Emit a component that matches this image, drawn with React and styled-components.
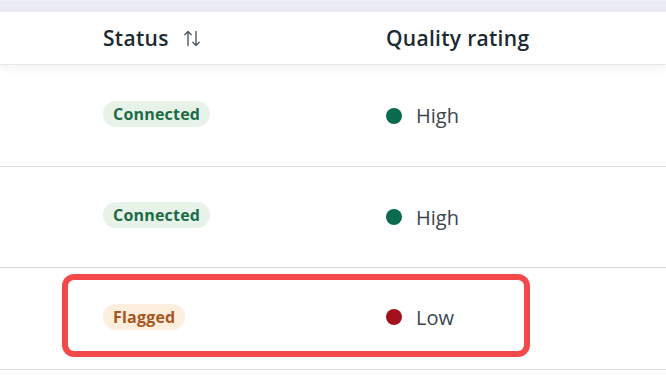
import React from 'react';
import styled, { createGlobalStyle } from 'styled-components';

const GlobalStyle = createGlobalStyle`
  body {
    margin: 0;
    background: #ffffff;
    font-family: "Open Sans", "Liberation Sans", sans-serif;
    color: #1c2b33;
  }
`;

const Page = styled.div`
  width: 666px;
  height: 380px;
  overflow: hidden;
  background: #ffffff;
`;

const TopBand = styled.div`
  height: 12px;
  background: #eaebf5;
  border-top: 1px solid #f1f2f8;
  box-sizing: border-box;
`;

const Row = styled.div`
  position: relative;
  display: grid;
  grid-template-columns: 283px 1fr;
  align-items: center;
  padding-left: 103px;
  height: ${p => p.$height}px;
  box-sizing: border-box;
  border-bottom: 1px solid ${p => (p.$header ? '#e6e7ea' : '#d8dce0')};
  ${p => p.$header && 'box-shadow: 0 3px 10px rgba(0, 0, 0, 0.05); z-index: 1;'}
`;

const HeadCell = styled.div`
  display: flex;
  align-items: center;
  gap: 14px;
  font-size: 21px;
  font-weight: 600;
  color: #1c2b33;
  letter-spacing: 0.3px;
`;

const Badge = styled.span`
  justify-self: start;
  display: inline-flex;
  align-items: center;
  height: 26px;
  padding: 0 10px;
  margin-top: -4px;
  border-radius: 13px;
  font-size: 16px;
  font-weight: 700;
  letter-spacing: 0.2px;
  background: ${p => (p.$tone === 'warn' ? '#fdeedd' : '#e7f3e8')};
  color: ${p => (p.$tone === 'warn' ? '#a8561c' : '#1c6b47')};
`;

const Rating = styled.div`
  display: flex;
  align-items: center;
  gap: 14px;
  font-size: 20px;
  color: #3a464e;
  margin-top: ${p => p.$shift || 0}px;
`;

const Dot = styled.span`
  width: 16px;
  height: 16px;
  border-radius: 50%;
  background: ${p => p.$color};
`;

const Highlight = styled.div`
  position: absolute;
  left: 62px;
  top: 6px;
  width: 468px;
  height: 83px;
  box-sizing: border-box;
  border: 6px solid #f24a4a;
  border-radius: 12px;
  pointer-events: none;
`;

const SortIcon = () => (
  <svg width="18" height="17" viewBox="0 0 18 17" fill="none" stroke="#4b5a63" strokeWidth="1.4" strokeLinecap="round" strokeLinejoin="round">
    <path d="M5 15.5V1.5M1.8 4.7L5 1.5l3.2 3.2" />
    <path d="M13 1.5v14M9.8 12.3L13 15.5l3.2-3.2" />
  </svg>
);

const rows = [
  { status: 'Connected', tone: 'ok', rating: 'High', color: '#0b6b4e' },
  { status: 'Connected', tone: 'ok', rating: 'High', color: '#0b6b4e' },
  { status: 'Flagged', tone: 'warn', rating: 'Low', color: '#a3111c', flagged: true, shift: -3 },
];

export default function App() {
  return (
    <Page>
      <GlobalStyle />
      <TopBand />
      <Row $header $height={53}>
        <HeadCell>
          Status <SortIcon />
        </HeadCell>
        <HeadCell>Quality rating</HeadCell>
      </Row>
      {rows.map((r, i) => (
        <Row key={i} $height={i === 1 ? 101 : 102}>
          <Badge $tone={r.tone}>{r.status}</Badge>
          <Rating $shift={r.shift}>
            <Dot $color={r.color} />
            {r.rating}
          </Rating>
          {r.flagged && <Highlight />}
        </Row>
      ))}
    </Page>
  );
}
